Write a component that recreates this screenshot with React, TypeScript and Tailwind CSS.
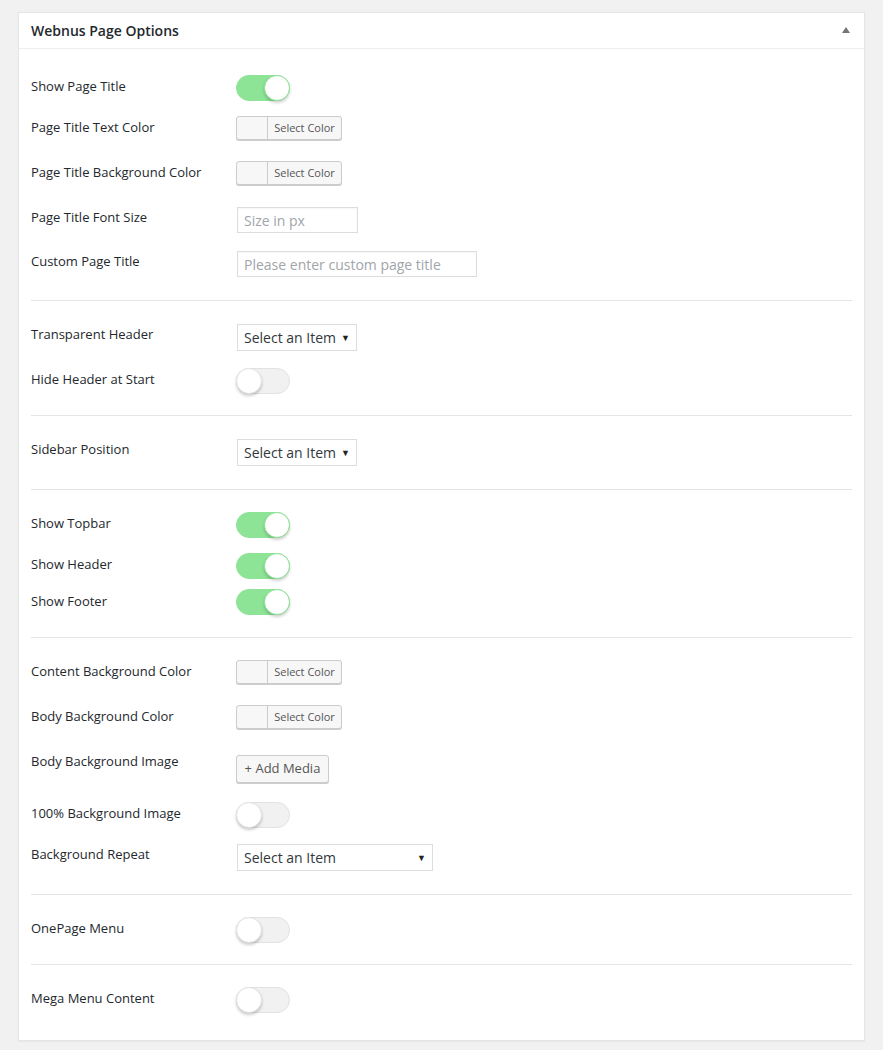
import React from "react";

type Ctrl =
  | { kind: "toggle"; on?: boolean }
  | { kind: "color" }
  | { kind: "input"; placeholder: string; w: string }
  | { kind: "select"; w: string }
  | { kind: "media" };

type Row = { label: string; mt: string; lpt: string; ctrl: Ctrl };

const sections: { pt: string; pb: string; rows: Row[] }[] = [
  {
    pt: "pt-[26px]",
    pb: "pb-[23px]",
    rows: [
      { label: "Show Page Title", mt: "mt-0", lpt: "pt-[2px]", ctrl: { kind: "toggle", on: true } },
      { label: "Page Title Text Color", mt: "mt-[15px]", lpt: "pt-[2px]", ctrl: { kind: "color" } },
      { label: "Page Title Background Color", mt: "mt-[21px]", lpt: "pt-[2px]", ctrl: { kind: "color" } },
      { label: "Page Title Font Size", mt: "mt-[22px]", lpt: "pt-[1px]", ctrl: { kind: "input", placeholder: "Size in px", w: "w-[121px]" } },
      { label: "Custom Page Title", mt: "mt-[18px]", lpt: "pt-[1px]", ctrl: { kind: "input", placeholder: "Please enter custom page title", w: "w-[240px]" } },
    ],
  },
  {
    pt: "pt-[23px]",
    pb: "pb-[21px]",
    rows: [
      { label: "Transparent Header", mt: "mt-0", lpt: "pt-[1px]", ctrl: { kind: "select", w: "w-[120px]" } },
      { label: "Hide Header at Start", mt: "mt-[17px]", lpt: "pt-[2px]", ctrl: { kind: "toggle" } },
    ],
  },
  {
    pt: "pt-[23px]",
    pb: "pb-[23px]",
    rows: [{ label: "Sidebar Position", mt: "mt-0", lpt: "pt-[1px]", ctrl: { kind: "select", w: "w-[120px]" } }],
  },
  {
    pt: "pt-[22px]",
    pb: "pb-[22px]",
    rows: [
      { label: "Show Topbar", mt: "mt-0", lpt: "pt-[2px]", ctrl: { kind: "toggle", on: true } },
      { label: "Show Header", mt: "mt-[15px]", lpt: "pt-[2px]", ctrl: { kind: "toggle", on: true } },
      { label: "Show Footer", mt: "mt-[10px]", lpt: "pt-[3px]", ctrl: { kind: "toggle", on: true } },
    ],
  },
  {
    pt: "pt-[22px]",
    pb: "pb-[23px]",
    rows: [
      { label: "Content Background Color", mt: "mt-0", lpt: "pt-[2px]", ctrl: { kind: "color" } },
      { label: "Body Background Color", mt: "mt-[21px]", lpt: "pt-[2px]", ctrl: { kind: "color" } },
      { label: "Body Background Image", mt: "mt-[26px]", lpt: "pt-0 -mt-[3px]", ctrl: { kind: "media" } },
      { label: "100% Background Image", mt: "mt-[19px]", lpt: "pt-[2px]", ctrl: { kind: "toggle" } },
      { label: "Background Repeat", mt: "mt-[16px]", lpt: "pt-[1px]", ctrl: { kind: "select", w: "w-[196px]" } },
    ],
  },
  {
    pt: "pt-[22px]",
    pb: "pb-[21px]",
    rows: [{ label: "OnePage Menu", mt: "mt-0", lpt: "pt-[2px]", ctrl: { kind: "toggle" } }],
  },
  {
    pt: "pt-[22px]",
    pb: "pb-[27px]",
    rows: [{ label: "Mega Menu Content", mt: "mt-0", lpt: "pt-[2px]", ctrl: { kind: "toggle" } }],
  },
];

function Toggle({ on }: { on?: boolean }) {
  return (
    <div
      className={
        on
          ? "relative w-[54px] h-[26px] rounded-full bg-[#8de396] border border-[#8de396]"
          : "relative w-[54px] h-[26px] rounded-full bg-[#f1f1f1] border border-[#e2e2e2]"
      }
    >
      <div
        className={
          on
            ? "absolute top-[-1px] right-[-1px] w-[26px] h-[26px] rounded-full bg-white border border-[#8de396] shadow-[0_2px_3px_rgba(0,0,0,0.18)]"
            : "absolute top-[-1px] left-[-1px] w-[26px] h-[26px] rounded-full bg-white border border-[#e2e2e2] shadow-[0_2px_3px_rgba(0,0,0,0.2)]"
        }
      />
    </div>
  );
}

function ColorButton() {
  return (
    <div className="flex h-[24px] w-[106px] rounded-[3px] border border-[#cccccc] bg-[#f7f7f7] shadow-[0_1px_0_#cccccc]">
      <div className="w-[31px] border-r border-[#cccccc]" />
      <div className="flex-1 flex items-center justify-center text-[11px] text-[#555555]">Select Color</div>
    </div>
  );
}

function Control({ c }: { c: Ctrl }) {
  if (c.kind === "toggle") return <Toggle on={c.on} />;
  if (c.kind === "color") return <ColorButton />;
  if (c.kind === "input")
    return (
      <div className={`${c.w} h-[26px] ml-px border border-[#dddddd] bg-white shadow-[inset_0_1px_2px_rgba(0,0,0,0.04)] flex items-center px-[6px] text-[14px] text-[#a0a5aa]`}>
        {c.placeholder}
      </div>
    );
  if (c.kind === "select")
    return (
      <div className={`${c.w} h-[27px] ml-px border border-[#dddddd] bg-white flex items-center justify-between pl-[6px] pr-[6px] text-[14px] text-[#32373c]`}>
        <span>Select an Item</span>
        <span className="text-[9px] text-[#222222]">▼</span>
      </div>
    );
  return (
    <div className="h-[28px] w-[93px] rounded-[3px] border border-[#cccccc] bg-[#f7f7f7] shadow-[0_1px_0_#cccccc] flex items-center justify-center text-[13px] text-[#555555]">
      + Add Media
    </div>
  );
}

export default function App() {
  return (
    <div className="min-h-[1050px] bg-[#f1f1f1] pt-[12px] pl-[18px] pr-[18px] pb-[9px] font-['Open_Sans',sans-serif]">
      <div className="w-[847px] bg-white border border-[#e5e5e5] shadow-[0_1px_1px_rgba(0,0,0,0.04)]">
        <div className="h-[36px] flex items-center justify-between pl-[12px] pr-[14px] border-b border-[#eeeeee]">
          <h2 className="text-[14px] font-semibold text-[#23282d]">Webnus Page Options</h2>
          <svg width="8" height="6" viewBox="0 0 8 6" className="mb-[1px]">
            <path d="M4 0 L8 6 L0 6 Z" fill="#72777c" />
          </svg>
        </div>
        <div className="px-[12px]">
          {sections.map((s, i) => (
            <div key={i} className={`${s.pt} ${s.pb} ${i < sections.length - 1 ? "border-b border-[#e5e5e5]" : ""}`}>
              {s.rows.map((r) => (
                <div key={r.label} className={`flex items-start ${r.mt}`}>
                  <div className={`w-[205px] text-[13px] leading-[18px] text-[#23282d] ${r.lpt}`}>{r.label}</div>
                  <Control c={r.ctrl} />
                </div>
              ))}
            </div>
          ))}
        </div>
      </div>
    </div>
  );
}
